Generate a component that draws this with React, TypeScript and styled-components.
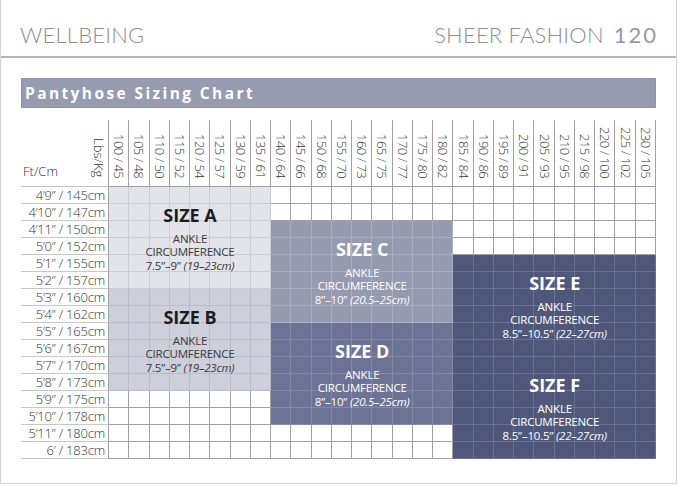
import React from 'react';
import styled, { createGlobalStyle } from 'styled-components';

const GlobalStyle = createGlobalStyle`
  html, body { margin: 0; padding: 0; background: #fff; }
  body { font-family: "Open Sans", "Liberation Sans", sans-serif; }
`;

type Tone = 'w' | 'a' | 'b' | 'c' | 'd' | 'e';

const tones: Record<Tone, { bg: string; line: string; ink: string; sub: string }> = {
  w: { bg: '#ffffff', line: '#a0a0a0', ink: '#222', sub: '#444' },
  a: { bg: '#e3e4ea', line: '#cbccd5', ink: '#1c1c1c', sub: '#3a3a3a' },
  b: { bg: '#cdd0db', line: '#b8bbc9', ink: '#1c1c1c', sub: '#3a3a3a' },
  c: { bg: '#959ab0', line: '#aaaec1', ink: '#ffffff', sub: '#ffffff' },
  d: { bg: '#6c7394', line: '#848aa6', ink: '#ffffff', sub: '#ffffff' },
  e: { bg: '#4f587a', line: '#6a7290', ink: '#ffffff', sub: '#ffffff' },
};

const columns = [
  '100 / 45', '105 / 48', '110 / 50', '115 / 52', '120 / 54', '125 / 57', '130 / 59', '135 / 61',
  '140 / 64', '145 / 66', '150 / 68', '155 / 70', '160 / 73', '165 / 75', '170 / 77', '175 / 80',
  '180 / 82', '185 / 84', '190 / 86', '195 / 89', '200 / 91', '205 / 93', '210 / 95', '215 / 98',
  '220 / 100', '225 / 102', '230 / 105',
];

const heights = [
  '4’9” / 145cm', '4’10” / 147cm', '4’11” / 150cm', '5’0” / 152cm', '5’1” / 155cm', '5’2” / 157cm',
  '5’3” / 160cm', '5’4” / 162cm', '5’5” / 165cm', '5’6” / 167cm', '5’7” / 170cm', '5’8” / 173cm',
  '5’9” / 175cm', '5’10” / 178cm', '5’11” / 180cm', '6’ / 183cm',
];

type Size = { name: string; r0: number; r1: number; c0: number; c1: number; range: string; metric: string; tone: Tone };

const sizes: Size[] = [
  { name: 'A', r0: 0, r1: 5, c0: 0, c1: 7, range: '7.5”–9”', metric: '(19–23cm)', tone: 'a' },
  { name: 'B', r0: 6, r1: 11, c0: 0, c1: 7, range: '7.5”–9”', metric: '(19–23cm)', tone: 'b' },
  { name: 'C', r0: 2, r1: 7, c0: 8, c1: 16, range: '8”–10”', metric: '(20.5–25cm)', tone: 'c' },
  { name: 'D', r0: 8, r1: 13, c0: 8, c1: 16, range: '8”–10”', metric: '(20.5–25cm)', tone: 'd' },
  { name: 'E', r0: 4, r1: 9, c0: 17, c1: 26, range: '8.5”–10.5”', metric: '(22–27cm)', tone: 'e' },
  { name: 'F', r0: 10, r1: 15, c0: 17, c1: 26, range: '8.5”–10.5”', metric: '(22–27cm)', tone: 'e' },
];

const toneAt = (r: number, c: number): Tone => {
  const s = sizes.find((z) => r >= z.r0 && r <= z.r1 && c >= z.c0 && c <= z.c1);
  return s ? s.tone : 'w';
};

const Card = styled.div`
  box-sizing: border-box;
  width: 677px;
  height: 484px;
  border: 1px solid #d3d3d3;
  border-top: none;
  background: #fff;
  display: flex;
  flex-direction: column;
`;

const Masthead = styled.header`
  box-sizing: border-box;
  height: 58px;
  display: flex;
  align-items: flex-end;
  justify-content: space-between;
  padding: 0 20px 10px 19px;
  border-bottom: 2px solid #b3b3c6;
`;

const Brand = styled.div`
  font-family: Lato, "Open Sans", sans-serif;
  font-weight: 300;
  font-size: 22px;
  line-height: 22px;
  color: #8e8e8e;
  letter-spacing: 0.2px;
`;

const Issue = styled.div`
  display: flex;
  align-items: baseline;
  gap: 10px;
  font-family: Lato, "Open Sans", sans-serif;
  font-size: 22px;
  line-height: 22px;
`;

const Series = styled.span`
  font-weight: 300;
  color: #8e8e8e;
  letter-spacing: 0.2px;
`;

const PageNo = styled.span`
  font-weight: 400;
  color: #9696b5;
  letter-spacing: 2px;
  margin-right: -2px;
`;

const TitleBar = styled.h1`
  box-sizing: border-box;
  margin: 20px 20px 0;
  height: 30px;
  display: flex;
  align-items: center;
  padding-left: 3px;
  background: #979bb0;
  border: 1px solid #8e92a7;
  color: #fff;
  font-size: 15.5px;
  font-weight: 700;
  letter-spacing: 2.4px;
`;

const HeaderRow = styled.div`
  display: grid;
  grid-template-columns: 88px repeat(27, 1fr);
  margin: 12px 20px 0;
  height: 67px;
`;

const AxisCell = styled.div`
  box-sizing: border-box;
  display: flex;
  justify-content: space-between;
  align-items: flex-end;
  padding: 0 3px 8px 2px;
  border-right: 1px solid #a0a0a0;
  border-bottom: 1px solid #c4c4c4;
  color: #333;
  font-size: 13px;
  font-weight: 300;
  font-stretch: 88%;
  line-height: 1;
`;

const AxisVertical = styled.span`
  writing-mode: vertical-rl;
  line-height: 1;
  margin-bottom: 1px;
`;

const ColHead = styled.div`
  box-sizing: border-box;
  display: flex;
  justify-content: center;
  align-items: flex-end;
  padding-bottom: 8px;
  border-right: 1px solid #a0a0a0;
  border-bottom: 1px solid #a0a0a0;
  color: #333;
  font-size: 13px;
  font-weight: 300;
  font-stretch: 88%;
  white-space: nowrap;
`;

const ColText = styled.span`
  writing-mode: vertical-rl;
  line-height: 1;
  letter-spacing: -0.5px;
`;

const Chart = styled.div`
  display: grid;
  grid-template-columns: 88px repeat(27, 1fr);
  grid-template-rows: repeat(16, 17px);
  margin: 0 20px;
`;

const RowLabel = styled.div<{ $row: number }>`
  grid-row: ${(p) => p.$row + 1};
  grid-column: 1;
  box-sizing: border-box;
  border-right: 1px solid #a0a0a0;
  border-bottom: 1px solid #c8c8c8;
  text-align: right;
  padding-right: 3px;
  font-size: 13px;
  font-weight: 300;
  font-stretch: 88%;
  line-height: 16px;
  color: #333;
  letter-spacing: -0.2px;
  white-space: nowrap;
`;

const Cell = styled.div<{ $row: number; $col: number; $tone: Tone }>`
  grid-row: ${(p) => p.$row + 1};
  grid-column: ${(p) => p.$col + 2};
  box-sizing: border-box;
  background: ${(p) => tones[p.$tone].bg};
  border-right: 1px solid ${(p) => tones[p.$tone].line};
  border-bottom: 1px solid ${(p) => tones[p.$tone].line};
`;

const SizeBlock = styled.div<{ $r0: number; $r1: number; $c0: number; $c1: number; $tone: Tone }>`
  grid-row: ${(p) => `${p.$r0 + 1} / ${p.$r1 + 2}`};
  grid-column: ${(p) => `${p.$c0 + 2} / ${p.$c1 + 3}`};
  z-index: 1;
  display: flex;
  flex-direction: column;
  align-items: center;
  justify-content: center;
  text-align: center;
  color: ${(p) => tones[p.$tone].sub};
  pointer-events: none;
`;

const SizeName = styled.div<{ $tone: Tone }>`
  font-size: 18px;
  font-weight: 700;
  line-height: 22px;
  margin-bottom: 6px;
  color: ${(p) => tones[p.$tone].ink};
`;

const SizeLine = styled.div`
  font-size: 11.5px;
  line-height: 13.5px;
  letter-spacing: -0.2px;
  white-space: nowrap;
`;

const Metric = styled.em`
  font-style: italic;
`;

export default function App() {
  return (
    <>
      <GlobalStyle />
      <Card>
        <Masthead>
          <Brand>WELLBEING</Brand>
          <Issue>
            <Series>SHEER FASHION</Series>
            <PageNo>120</PageNo>
          </Issue>
        </Masthead>
        <TitleBar>Pantyhose Sizing Chart</TitleBar>
        <HeaderRow>
          <AxisCell>
            <span>Ft/Cm</span>
            <AxisVertical>Lbs/Kg</AxisVertical>
          </AxisCell>
          {columns.map((c) => (
            <ColHead key={c}>
              <ColText>{c}</ColText>
            </ColHead>
          ))}
        </HeaderRow>
        <Chart>
          {heights.map((h, r) => (
            <React.Fragment key={h}>
              <RowLabel $row={r}>{h}</RowLabel>
              {columns.map((c, ci) => (
                <Cell key={c} $row={r} $col={ci} $tone={toneAt(r, ci)} />
              ))}
            </React.Fragment>
          ))}
          {sizes.map((s) => (
            <SizeBlock key={s.name} $r0={s.r0} $r1={s.r1} $c0={s.c0} $c1={s.c1} $tone={s.tone}>
              <SizeName $tone={s.tone}>SIZE {s.name}</SizeName>
              <SizeLine>ANKLE</SizeLine>
              <SizeLine>CIRCUMFERENCE</SizeLine>
              <SizeLine>
                {s.range} <Metric>{s.metric}</Metric>
              </SizeLine>
            </SizeBlock>
          ))}
        </Chart>
      </Card>
    </>
  );
}
